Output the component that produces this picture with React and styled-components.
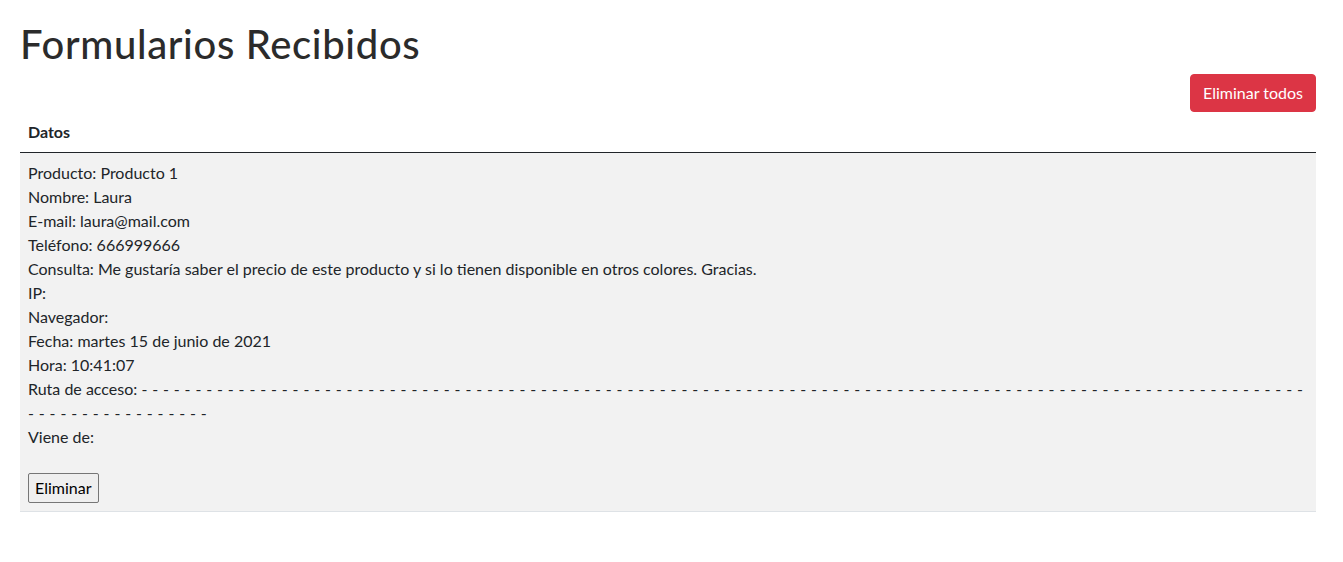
import React from "react";
import styled, { createGlobalStyle } from "styled-components";

const GlobalStyle = createGlobalStyle`
  body {
    margin: 0;
    font-family: Lato, "Liberation Sans", sans-serif;
    font-size: 16px;
    line-height: 1.5;
    color: #212529;
    background: #fff;
  }
`;

const Page = styled.div`
  padding: 20px 27px 0 20px;
`;

const Title = styled.h1`
  margin: 0 0 6px;
  font-size: 40px;
  font-weight: 500;
  line-height: 1.2;
  letter-spacing: 0.65px;
  color: #2b2b2b;
`;

const Actions = styled.div`
  display: flex;
  justify-content: flex-end;
`;

const DangerButton = styled.button`
  font-family: inherit;
  font-size: 16px;
  line-height: 24px;
  padding: 6px 12px;
  color: #fff;
  background: #dc3545;
  border: 1px solid #dc3545;
  border-radius: 4px;
  cursor: pointer;
`;

const Table = styled.table`
  width: 100%;
  border-collapse: collapse;
`;

const HeadCell = styled.th`
  text-align: left;
  font-weight: 700;
  padding: 8px;
  border-bottom: 1px solid #212529;
`;

const Row = styled.tr`
  background: ${(p) => (p.striped ? "#f2f2f2" : "transparent")};
  border-bottom: 1px solid #dee2e6;
`;

const Cell = styled.td`
  padding: 8px;
  vertical-align: top;
`;

const Line = styled.div``;

const Dashes = styled.span`
  letter-spacing: 0.38px;
`;

const ButtonRow = styled.div`
  margin-top: 24px;
  line-height: 0;
`;

const PlainButton = styled.button`
  font-family: inherit;
  font-size: 16px;
  line-height: 24px;
  padding: 2px 6px;
  color: #000;
  background: #efefef;
  border: 1px solid #767676;
  border-radius: 2px;
`;

const entry = {
  producto: "Producto 1",
  nombre: "Laura",
  email: "laura@mail.com",
  telefono: "666999666",
  consulta:
    "Me gustaría saber el precio de este producto y si lo tienen disponible en otros colores. Gracias.",
  ip: "",
  navegador: "",
  fecha: "martes 15 de junio de 2021",
  hora: "10:41:07",
  ruta: Array(125).fill("-").join(" "),
  viene: "",
};

export default function App() {
  return (
    <>
      <GlobalStyle />
      <Page>
        <Title>Formularios Recibidos</Title>
        <Actions>
          <DangerButton>Eliminar todos</DangerButton>
        </Actions>
        <Table>
          <thead>
            <tr>
              <HeadCell>Datos</HeadCell>
            </tr>
          </thead>
          <tbody>
            <Row striped>
              <Cell>
                <Line>Producto: {entry.producto}</Line>
                <Line>Nombre: {entry.nombre}</Line>
                <Line>E-mail: {entry.email}</Line>
                <Line>Teléfono: {entry.telefono}</Line>
                <Line>Consulta: {entry.consulta}</Line>
                <Line>IP: {entry.ip}</Line>
                <Line>Navegador: {entry.navegador}</Line>
                <Line>Fecha: {entry.fecha}</Line>
                <Line>Hora: {entry.hora}</Line>
                <Line>
                  Ruta de acceso: <Dashes>{entry.ruta}</Dashes>
                </Line>
                <Line>Viene de: {entry.viene}</Line>
                <ButtonRow>
                  <PlainButton>Eliminar</PlainButton>
                </ButtonRow>
              </Cell>
            </Row>
          </tbody>
        </Table>
      </Page>
    </>
  );
}
